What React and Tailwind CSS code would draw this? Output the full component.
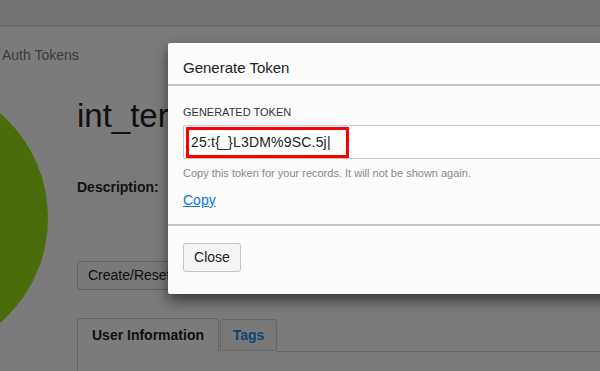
import React from "react";

function PageBehind() {
  return (
    <div className="flex h-full flex-col bg-[#f7f7f7] text-[#222]">
      {/* top bar */}
      <div className="h-[27px] shrink-0 border-b-2 border-[#d6d6d6] bg-[#e9e9e9]" />

      {/* breadcrumb */}
      <div className="mt-[19px] pl-[2px] text-[14px] leading-[18px] text-[#777]">Auth Tokens</div>

      <div className="flex">
        {/* avatar */}
        <div className="ml-[-230px] mt-[15px] h-[278px] w-[278px] shrink-0 rounded-full bg-[#96d814]" />

        <div className="ml-[29px] flex flex-1 flex-col">
          <h1 className="mt-[32px] text-[33px] leading-[40px] text-[#222]">int_terraform_user</h1>
          <div className="mt-[42px] text-[14px] font-bold leading-[18px]">Description:</div>
          <button className="mt-[65px] h-[29px] w-[200px] rounded-[3px] border border-[#c4c4c4] bg-[#f3f3f3] px-[10px] text-left text-[14px] text-[#222]">
            Create/Reset Password
          </button>

          {/* tabs */}
          <div className="mt-[28px] flex">
            <div className="flex h-[34px] w-[142px] items-center justify-center rounded-t-[3px] border border-b-0 border-[#cfcfcf] bg-[#f7f7f7] text-[14px] font-bold">
              User Information
            </div>
            <div className="ml-[1px] mt-[1px] flex h-[32px] w-[57px] items-center justify-center rounded-t-[3px] border border-[#cfcfcf] bg-[#f1f1f1] text-[14px] font-bold text-[#1f8be0]">
              Tags
            </div>
            <div className="flex-1 border-b border-[#cfcfcf]" />
          </div>
          <div className="h-[40px] border-l border-[#cfcfcf]" />
        </div>
      </div>
    </div>
  );
}

function TokenModal() {
  return (
    <div className="absolute left-[168px] top-[43px] w-[460px] rounded-[2px] bg-[#fcfcfc] shadow-[0_6px_14px_rgba(0,0,0,0.55)]">
      <div className="h-[43px] border-b-2 border-[#c3c3c9] px-[15px] pt-[16px]">
        <h2 className="text-[15px] leading-[18px] text-[#222]">Generate Token</h2>
      </div>

      <div className="h-[140px] border-b-2 border-[#c3c3c9] px-[15px] pt-[19px]">
        <label className="block text-[11px] leading-[14px] text-[#333]">GENERATED TOKEN</label>
        <div className="mt-[6px] flex h-[34px] items-center rounded-[2px] border border-[#c6c6c6] bg-white pl-[2px]">
          <div className="flex h-[31px] w-[163px] items-center border-[3px] border-[#ff0000] pl-[2px]">
            <span className="text-[14px] tracking-[0.2px] text-[#222]">25:t{"{"}_}L3DM%9SC.5j|</span>
          </div>
        </div>
        <p className="mt-[7px] text-[11px] leading-[14px] text-[#888]">
          Copy this token for your records. It will not be shown again.
        </p>
        <a href="#" className="mt-[11px] inline-block text-[14px] leading-[18px] text-[#0a78d7] underline">
          Copy
        </a>
      </div>

      <div className="h-[68px] px-[15px] pt-[17px]">
        <button className="h-[29px] w-[58px] rounded-[3px] border border-[#c4c4c4] bg-[#f4f4f4] text-[14px] text-[#222]">
          Close
        </button>
      </div>
    </div>
  );
}

export default function App() {
  return (
    <div
      className="relative h-[371px] w-[600px] overflow-hidden"
      style={{ fontFamily: '"Liberation Sans", Arial, sans-serif' }}
    >
      <PageBehind />
      {/* dim overlay */}
      <div className="absolute inset-0 bg-black/50" />
      <TokenModal />
    </div>
  );
}
